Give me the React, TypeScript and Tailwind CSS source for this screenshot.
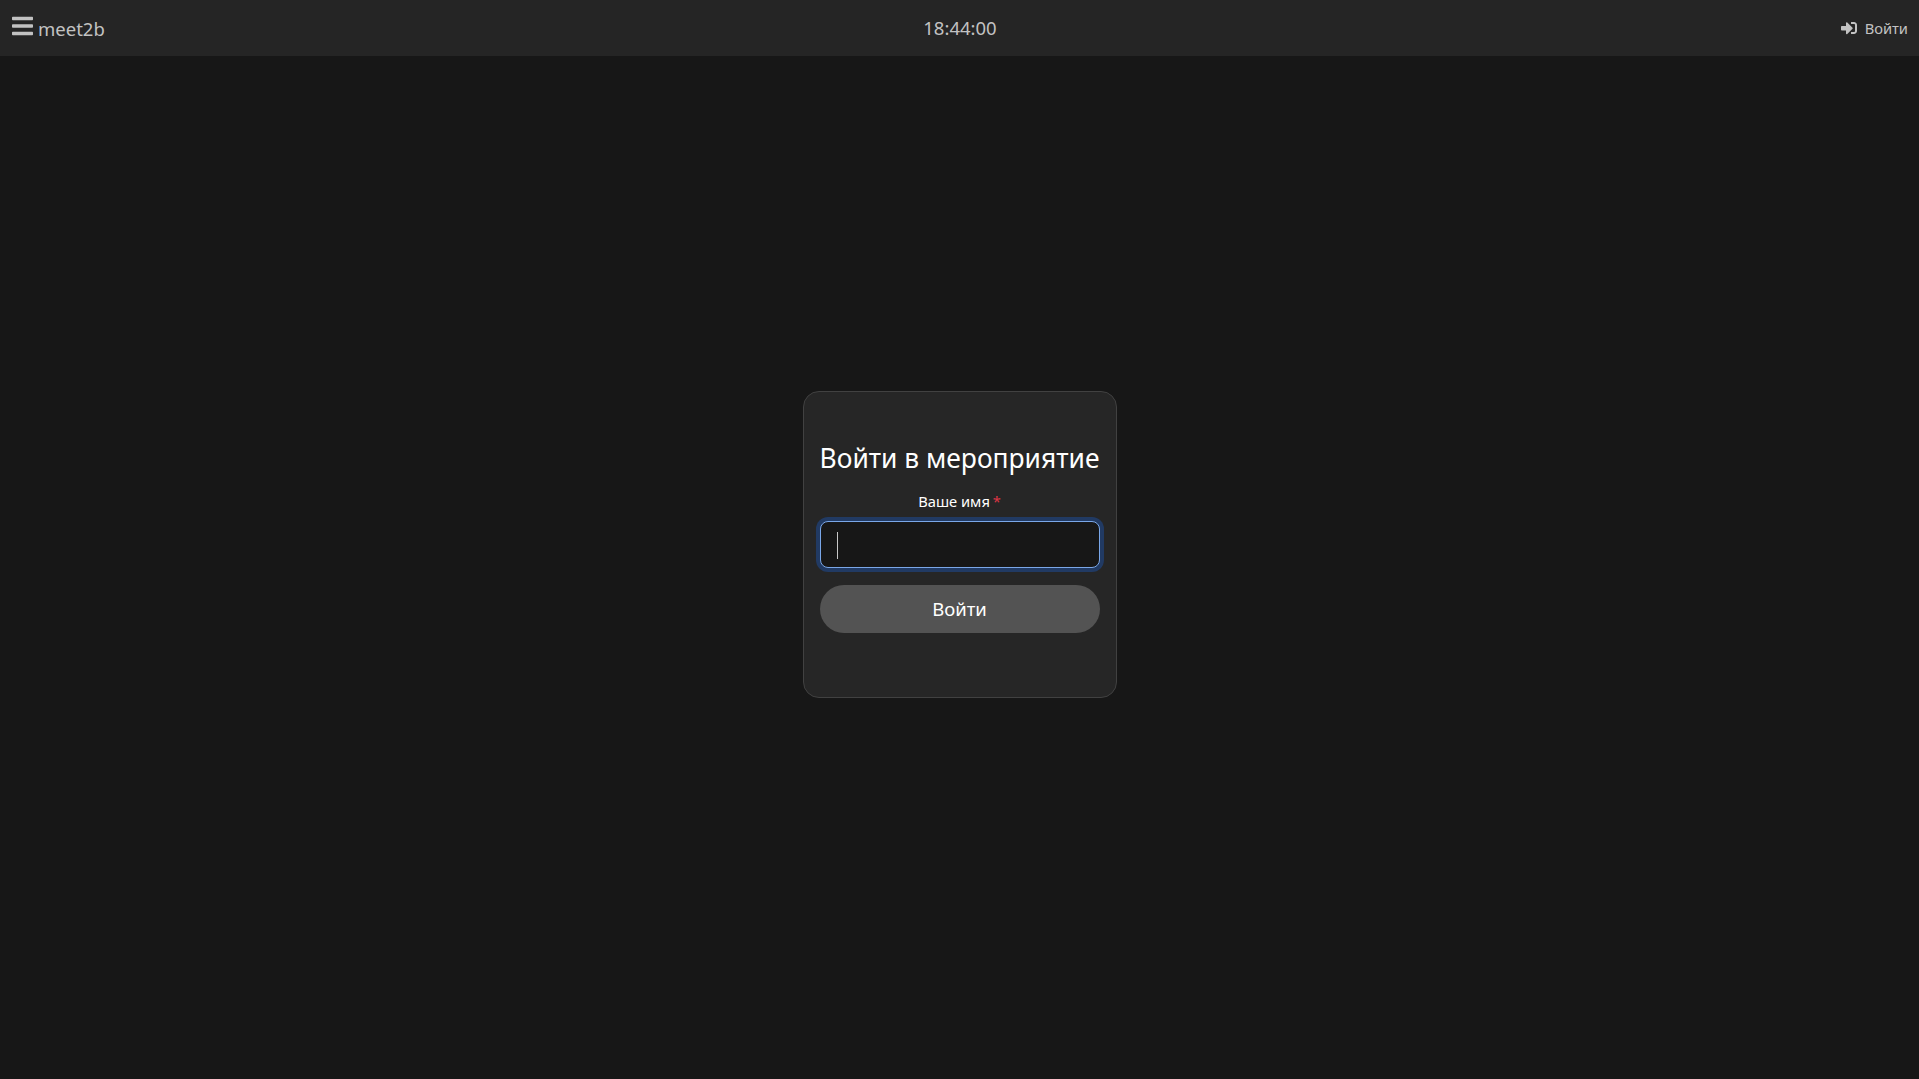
import React from 'react';
import { FaBars, FaSignInAlt } from 'react-icons/fa';

const font = "font-['Noto_Sans','Open_Sans',sans-serif]";

const Header = () => {
  return (
    <header className="h-[56px] bg-[#252525] flex items-center justify-between pl-3 pr-[11px] text-[#c2c2c2]">
      <div className="w-[300px] flex items-center">
        <FaBars className="w-[21px] h-[24px] -mt-[4px]" />
        <span className="ml-[5px] text-[18.5px] leading-none mt-[3px]">meet2b</span>
      </div>
      <span className="text-[18.5px] leading-none">18:44:00</span>
      <div className="w-[300px] flex items-center justify-end gap-2">
        <FaSignInAlt className="w-4 h-4" />
        <span className="text-[14.7px] leading-none">Войти</span>
      </div>
    </header>
  );
};

const JoinCard = () => {
  return (
    <div className="w-[314px] h-[307px] bg-[#262626] border border-[#414141] rounded-2xl px-4 pt-[48px] flex flex-col items-center">
      <h1 className="text-[26.4px] leading-9 text-white whitespace-nowrap">Войти в мероприятие</h1>
      <label className="mt-[15px] text-[14.7px] leading-5 text-white">
        Ваше имя <span className="text-[#dc3545] -ml-[1px]">*</span>
      </label>
      <div className="relative mt-[10px] w-[280px] h-[47px]">
        <input
          type="text"
          className="w-full h-full bg-[#171717] border border-[#7aa7e8] rounded-lg outline-none shadow-[0_0_0_4px_#213a63]"
        />
        <span className="absolute left-[17px] top-[11px] w-px h-[27px] bg-[#c8c8c8]" />
      </div>
      <button className="mt-[17px] w-[280px] h-[48px] rounded-3xl bg-[#535353] text-white text-[18.5px]">
        Войти
      </button>
    </div>
  );
};

export default function App() {
  return (
    <div className={`min-h-screen bg-[#171717] ${font}`}>
      <Header />
      <main className="flex justify-center pt-[335px]">
        <JoinCard />
      </main>
    </div>
  );
}
